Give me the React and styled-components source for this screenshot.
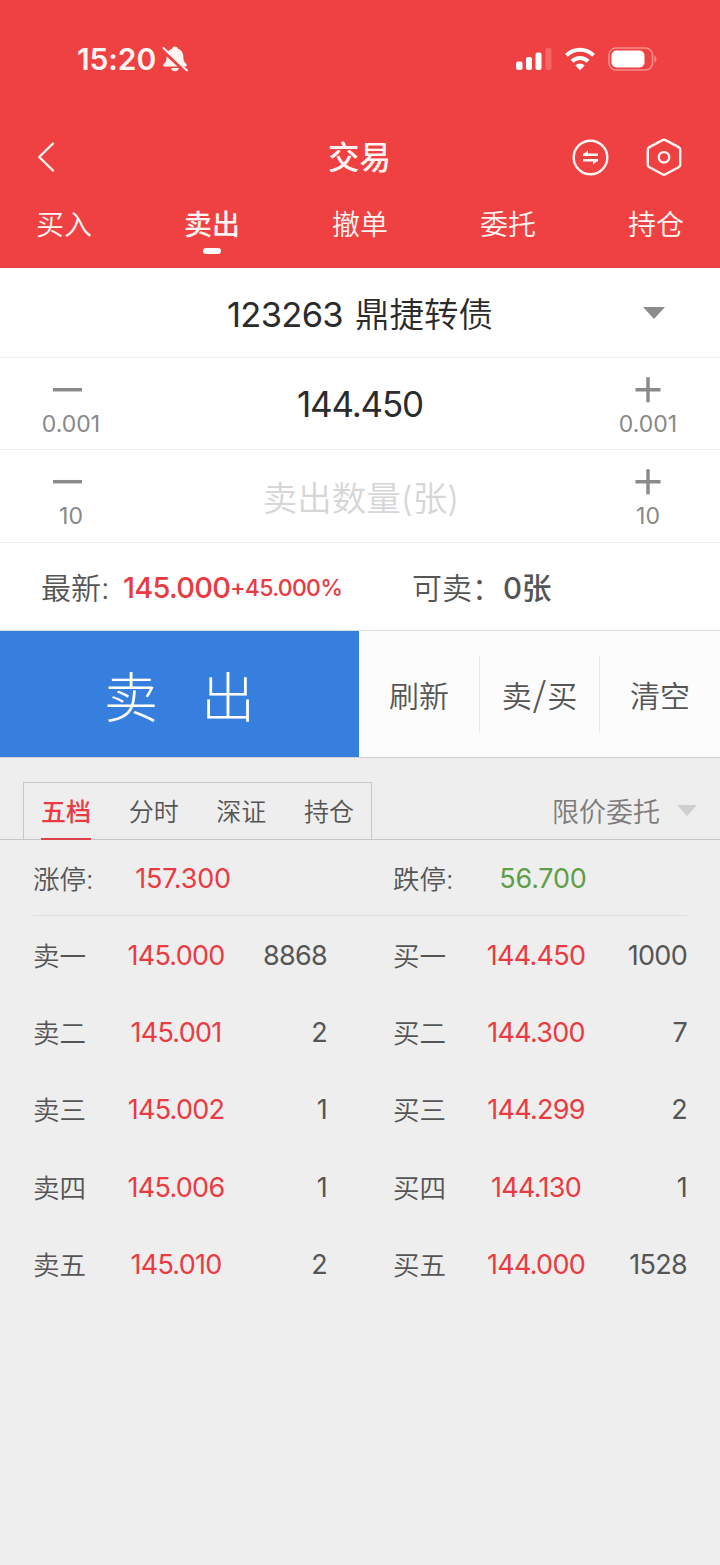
import React, { useState } from 'react';
import styled, { createGlobalStyle } from 'styled-components';

const GlobalStyle = createGlobalStyle`
  * {
    box-sizing: border-box;
  }

  body {
    margin: 0;
    background: #eeeeee;
    font-family: Inter, 'Noto Sans CJK SC', sans-serif;
    font-weight: 400;
    color: #555;
  }

  button {
    border: none;
    background: none;
    padding: 0;
    font: inherit;
    color: inherit;
    white-space: nowrap;
  }
`;

const Page = styled.div`
  width: 720px;
  height: 1565px;
  background: #eeeeee;
  overflow: hidden;
`;

const Header = styled.header`
  height: 268px;
  background: #f04142;
  color: #fff5f2;
  border-bottom: 1px solid #dc4644;
`;

const StatusBar = styled.div`
  height: 118px;
  padding: 0 63px 0 77px;
  display: flex;
  align-items: center;
  justify-content: space-between;
`;

const StatusGroup = styled.div`
  display: flex;
  align-items: center;
  gap: ${(props) => props.$gap}px;
`;

const Clock = styled.span`
  font-size: 30px;
  line-height: 36px;
  font-weight: 600;
  letter-spacing: -0.1px;
`;

const NavBar = styled.div`
  height: 79px;
  padding: 0 38px 1px 37px;
  display: grid;
  grid-template-columns: 1fr auto 1fr;
  align-items: center;
`;

const NavTitle = styled.h1`
  margin: 0;
  padding-top: 2px;
  font-size: 31.5px;
  line-height: 40px;
  font-weight: 500;
`;

const NavActions = styled.div`
  display: flex;
  justify-content: flex-end;
  gap: 37px;
`;

const MainTabs = styled.nav`
  height: 70px;
  padding: 8px 36px 0;
  display: flex;
  justify-content: space-between;
  align-items: flex-start;
`;

const MainTab = styled.button`
  display: flex;
  flex-direction: column;
  align-items: center;
  gap: 3px;
  font-size: 28px;
  line-height: 40px;
  font-weight: ${(props) => (props.$active ? 500 : 350)};

  &::after {
    content: '';
    width: 18px;
    height: 6px;
    border-radius: 3px;
    background: ${(props) => (props.$active ? '#fff' : 'transparent')};
  }
`;

const FormRow = styled.div`
  height: ${(props) => props.$height}px;
  display: grid;
  grid-template-columns: 142px 1fr 142px;
  align-items: center;
  background: #fff;
  border-bottom: 1px solid #ececec;
`;

const StockName = styled.div`
  grid-column: 2;
  padding-top: 4px;
  display: flex;
  justify-content: center;
  align-items: center;
  gap: 12px;
  font-size: 34.5px;
  line-height: 50px;
  font-weight: 350;
  color: #2b2b2b;
  white-space: nowrap;
`;

const StockCode = styled.span`
  font-weight: 380;
  letter-spacing: -0.7px;
`;

const Caret = styled.span`
  width: 0;
  height: 0;
  border-left: ${(props) => props.$size}px solid transparent;
  border-right: ${(props) => props.$size}px solid transparent;
  border-top: ${(props) => props.$size + 1}px solid ${(props) => props.$color};
`;

const CaretCell = styled.div`
  display: flex;
  padding: 1px 0 0 65px;
`;

const StepButton = styled.button`
  height: 100%;
  padding: ${(props) => (props.$side === 'left' ? '19px 7px 0 0' : '19px 2px 0 0')};
  display: flex;
  flex-direction: column;
  align-items: center;
  gap: 5px;
  color: #888;
  font-size: 23px;
  line-height: 32px;
`;

const StepValue = styled.span`
  padding-left: ${(props) => props.$indent || 0}px;
`;

const FieldValue = styled.div`
  padding-top: 1px;
  text-align: center;
  font-size: 35px;
  line-height: 50px;
  font-weight: 380;
  letter-spacing: -1.2px;
  color: #2b2b2b;
`;

const Placeholder = styled(FieldValue)`
  padding: 5px 0 0 2px;
  font-size: 34.5px;
  font-weight: 350;
  letter-spacing: 0;
  color: #d6d6d6;
`;

const QuoteRow = styled.div`
  height: 88px;
  padding: 3px 0 0 41px;
  display: flex;
  align-items: center;
  background: #fff;
  border-bottom: 1px solid #dcdcdc;
  font-size: 30px;
  line-height: 44px;
  white-space: nowrap;
`;

const QuoteItem = styled.div`
  width: ${(props) => props.$width}px;
  display: flex;
  align-items: center;
`;

const QuoteLabel = styled.span`
  width: ${(props) => props.$width}px;
  font-weight: 350;
`;

const LastPrice = styled.span`
  font-size: 29px;
  font-weight: 500;
  letter-spacing: -0.75px;
  color: #ea3a42;
`;

const LastChange = styled.span`
  font-size: 23px;
  font-weight: 500;
  letter-spacing: -0.7px;
  color: #ea3a42;
`;

const Available = styled.span`
  font-size: 29.5px;
  font-weight: 500;
`;

const ActionBar = styled.div`
  height: 127px;
  display: flex;
  background: #fcfcfc;
  border-bottom: 1px solid #cfcfcf;
`;

const SellButton = styled.button`
  width: 359px;
  background: #377fdf;
  color: #fff;
  font-size: 54px;
  font-weight: 300;
  display: flex;
  align-items: center;
  justify-content: center;
  gap: 43px;
`;

const SideActions = styled.div`
  flex: 1;
  padding: 25px 0 24px;
  display: grid;
  grid-template-columns: 120px 120px 1fr;
`;

const SideAction = styled.button`
  padding-top: 2px;
  font-size: 30px;
  line-height: 44px;
  font-weight: 350;

  & + & {
    border-left: 1px solid #e9e9e9;
  }
`;

const Slash = styled.span`
  margin: 0 1px;
  font-family: 'Noto Sans CJK SC', sans-serif;
  font-size: 34px;
  line-height: 1;
`;

const BookHeader = styled.div`
  height: 82px;
  padding: 24px 23px 0;
  display: flex;
  justify-content: space-between;
  border-bottom: 1px solid #c8c8c8;
`;

const BookTabs = styled.div`
  width: 349px;
  padding: 0 17px;
  display: flex;
  justify-content: space-between;
  border: 1px solid #c8c8c8;
  border-bottom: none;
`;

const BookTab = styled.button`
  height: 57px;
  padding-top: 3px;
  font-size: 25px;
  line-height: 36px;
  font-weight: ${(props) => (props.$active ? 500 : 350)};
  color: ${(props) => (props.$active ? '#ea3a42' : '#555')};
  border-bottom: 2px solid ${(props) => (props.$active ? '#e0424b' : 'transparent')};
`;

const OrderType = styled.button`
  display: flex;
  align-items: center;
  gap: 17px;
  font-size: 27px;
  font-weight: 350;
  color: #7c7c7c;
`;

const Book = styled.div`
  padding: 0 33px;
`;

const BookRow = styled.div`
  height: ${(props) => (props.$limit ? 76 : 77.2)}px;
  padding-top: ${(props) => (props.$limit ? 2 : 3)}px;
  display: grid;
  grid-template-columns: 294px 294px;
  column-gap: 66px;
  align-items: center;
  font-size: 27px;
  line-height: 40px;
  font-weight: 350;
  border-bottom: ${(props) => (props.$limit ? '1px solid #dedede' : 'none')};
`;

const Level = styled.div`
  display: flex;
  align-items: center;
`;

const LevelLabel = styled.span`
  width: 86px;
  font-size: 26.5px;
`;

const LevelPrice = styled.span`
  width: ${(props) => (props.$limit ? 128 : 114)}px;
  text-align: center;
  font-weight: 380;
  letter-spacing: ${(props) => (props.$limit ? -0.2 : -0.75)}px;
  white-space: nowrap;
  color: ${(props) => (props.$down ? '#5f9e45' : '#ea3a42')};
`;

const LevelVolume = styled.span`
  flex: 1;
  text-align: right;
  font-weight: 380;
  letter-spacing: -0.7px;
`;

const BellOffIcon = () => (
  <svg width="28" height="28" viewBox="0 0 28 28">
    <path
      d="M14 1.500c1.600 0 2.700 1 2.900 2.200 3.700 1.200 5.300 4.200 5.400 7.600.1 4.200 1 6 3 7.800.9.900.5 2.400-.9 2.400H3.600c-1.400 0-1.800-1.500-.9-2.400 2-1.800 2.900-3.600 3-7.800.1-3.400 1.700-6.400 5.400-7.600.2-1.200 1.300-2.200 2.900-2.200z"
      fill="#fff5f2"
    />
    <path d="M10 23h8c-.5 2-2 3.300-4 3.300S10.500 25 10 23z" fill="#fff5f2" />
    <path d="M1 4.500L25 27" stroke="#f04142" strokeWidth="3.600" />
    <path d="M2.500 3L26 25.500" stroke="#fff5f2" strokeWidth="1.900" strokeLinecap="round" />
  </svg>
);

const SignalIcon = () => (
  <svg width="36" height="24" viewBox="0 0 36 24" fill="#fff">
    <rect x="0" y="14.500" width="6.500" height="8.500" rx="2" />
    <rect x="10" y="10" width="6" height="13" rx="2" />
    <rect x="19.500" y="5.500" width="6" height="17.500" rx="2" />
    <rect x="29.500" y="1" width="6" height="22" rx="2" opacity="0.2" />
  </svg>
);

const WifiIcon = () => (
  <svg width="30" height="24" viewBox="0 0 30 24" fill="none" stroke="#fff" strokeWidth="4">
    <path d="M1.500 8.400a19 19 0 0 1 27 0" />
    <path d="M7 14.200a11.500 11.500 0 0 1 16 0" />
    <path d="M15 23.200l-4.700-4.700a6.600 6.600 0 0 1 9.400 0z" fill="#fff" stroke="none" />
  </svg>
);

const BatteryIcon = () => (
  <svg width="49" height="24" viewBox="0 0 49 24">
    <rect x="1" y="1" width="43.500" height="22" rx="7" fill="none" stroke="#fff" strokeWidth="1.600" opacity="0.4" />
    <rect x="3.500" y="3.500" width="33" height="17" rx="5" fill="#fff" />
    <path d="M46.500 8.500c2.500 1 2.500 6 0 7z" fill="#fff" opacity="0.45" />
  </svg>
);

const BackIcon = () => (
  <svg width="18" height="30" viewBox="0 0 18 30" fill="none" stroke="#fff5f2" strokeWidth="2.400">
    <path d="M16 1.500L2.200 15L16 28.500" strokeLinecap="round" strokeLinejoin="round" />
  </svg>
);

const SwapIcon = () => (
  <svg width="37" height="38" viewBox="0 0 37 38" fill="none" stroke="#fff5f2" strokeWidth="2.400">
    <circle cx="18.500" cy="19.500" r="16.800" />
    <path d="M11 16.700h15M11 22.200h15" strokeWidth="2.400" />
    <path d="M10.500 17.200l5.500-5v5zM26.500 21.700l-5.500 5v-5z" fill="#fff5f2" stroke="none" />
  </svg>
);

const SettingsIcon = () => (
  <svg width="36" height="38" viewBox="0 0 36 38" fill="none" stroke="#fff5f2" strokeWidth="2.400">
    <path
      d="M16.500 2.100q1.500-.8 3 0l13.100 7q1.600.9 1.600 2.600v15q0 1.700-1.600 2.600l-13.100 7q-1.500.8-3 0l-13.100-7q-1.600-.9-1.600-2.600v-15q0-1.700 1.600-2.600z"
      strokeLinejoin="round"
    />
    <circle cx="18" cy="19.300" r="5.200" />
  </svg>
);

const MinusIcon = () => (
  <svg width="30" height="26" viewBox="0 0 30 26" stroke="#8a8a8a" strokeWidth="3.500">
    <path d="M0 12.700h29" />
  </svg>
);

const PlusIcon = () => (
  <svg width="26" height="26" viewBox="0 0 26 26" stroke="#8a8a8a" strokeWidth="3.500">
    <path d="M0.500 12.700h25M13 0.200v25" />
  </svg>
);

const mainTabs = ['买入', '卖出', '撤单', '委托', '持仓'];
const bookTabs = ['五档', '分时', '深证', '持仓'];

const levels = [
  { ask: ['卖一', '145.000', '8868'], bid: ['买一', '144.450', '1000'] },
  { ask: ['卖二', '145.001', '2'], bid: ['买二', '144.300', '7'] },
  { ask: ['卖三', '145.002', '1'], bid: ['买三', '144.299', '2'] },
  { ask: ['卖四', '145.006', '1'], bid: ['买四', '144.130', '1'] },
  { ask: ['卖五', '145.010', '2'], bid: ['买五', '144.000', '1528'] },
];

const LevelCell = ({ data }) => (
  <Level>
    <LevelLabel>{data[0]}</LevelLabel>
    <LevelPrice>{data[1]}</LevelPrice>
    <LevelVolume>{data[2]}</LevelVolume>
  </Level>
);

const Stepper = ({ step, height, children }) => (
  <FormRow $height={height}>
    <StepButton $side="left">
      <MinusIcon />
      <StepValue $indent={7}>{step}</StepValue>
    </StepButton>
    {children}
    <StepButton $side="right">
      <PlusIcon />
      <StepValue>{step}</StepValue>
    </StepButton>
  </FormRow>
);

const App = () => {
  const [tab, setTab] = useState('卖出');
  const [bookTab, setBookTab] = useState('五档');

  return (
    <Page>
      <GlobalStyle />
      <Header>
        <StatusBar>
          <StatusGroup $gap={5}>
            <Clock>15:20</Clock>
            <BellOffIcon />
          </StatusGroup>
          <StatusGroup $gap={13}>
            <SignalIcon />
            <WifiIcon />
            <BatteryIcon />
          </StatusGroup>
        </StatusBar>
        <NavBar>
          <BackIcon />
          <NavTitle>交易</NavTitle>
          <NavActions>
            <SwapIcon />
            <SettingsIcon />
          </NavActions>
        </NavBar>
        <MainTabs>
          {mainTabs.map((name) => (
            <MainTab key={name} $active={name === tab} onClick={() => setTab(name)}>
              {name}
            </MainTab>
          ))}
        </MainTabs>
      </Header>

      <FormRow $height={90}>
        <StockName>
          <StockCode>123263</StockCode>
          <span>鼎捷转债</span>
        </StockName>
        <CaretCell>
          <Caret $size={11} $color="#8c8c8c" />
        </CaretCell>
      </FormRow>
      <Stepper step="0.001" height={92}>
        <FieldValue>144.450</FieldValue>
      </Stepper>
      <Stepper step="10" height={93}>
        <Placeholder>卖出数量(张)</Placeholder>
      </Stepper>

      <QuoteRow>
        <QuoteItem $width={371}>
          <QuoteLabel $width={82}>最新:</QuoteLabel>
          <LastPrice>145.000</LastPrice>
          <LastChange>+45.000%</LastChange>
        </QuoteItem>
        <QuoteItem $width={200}>
          <QuoteLabel $width={91}>可卖：</QuoteLabel>
          <Available>0张</Available>
        </QuoteItem>
      </QuoteRow>

      <ActionBar>
        <SellButton>
          <span>卖</span>
          <span>出</span>
        </SellButton>
        <SideActions>
          <SideAction>刷新</SideAction>
          <SideAction>
            卖<Slash>/</Slash>买
          </SideAction>
          <SideAction>清空</SideAction>
        </SideActions>
      </ActionBar>

      <BookHeader>
        <BookTabs>
          {bookTabs.map((name) => (
            <BookTab key={name} $active={name === bookTab} onClick={() => setBookTab(name)}>
              {name}
            </BookTab>
          ))}
        </BookTabs>
        <OrderType>
          限价委托
          <Caret $size={10} $color="#cfcfcf" />
        </OrderType>
      </BookHeader>

      <Book>
        <BookRow $limit>
          <Level>
            <LevelLabel>涨停:</LevelLabel>
            <LevelPrice $limit>157.300</LevelPrice>
          </Level>
          <Level>
            <LevelLabel>跌停:</LevelLabel>
            <LevelPrice $limit $down>
              56.700
            </LevelPrice>
          </Level>
        </BookRow>
        {levels.map((level) => (
          <BookRow key={level.ask[0]}>
            <LevelCell data={level.ask} />
            <LevelCell data={level.bid} />
          </BookRow>
        ))}
      </Book>
    </Page>
  );
};

export default App;
